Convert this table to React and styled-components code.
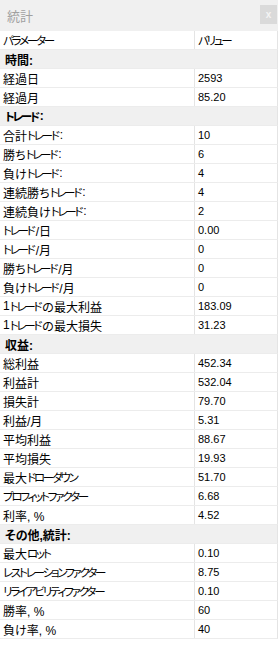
import React from "react";
import styled, { createGlobalStyle } from "styled-components";

const GlobalStyle = createGlobalStyle`
  html, body {
    margin: 0;
    padding: 0;
    background: #ffffff;
  }
  body {
    font-family: "Liberation Sans", "Noto Sans CJK JP", sans-serif;
    font-size: 12px;
    color: #000;
    font-feature-settings: "palt";
  }
`;

const Panel = styled.div`
  width: 278px;
  height: 656px;
  background: #fff;
  display: flex;
  flex-direction: column;
`;

const TitleBar = styled.div`
  height: 31px;
  background: #f0f0f0;
  display: flex;
  align-items: center;
  justify-content: space-between;
  padding-left: 7px;
  box-sizing: border-box;
`;

const Title = styled.span`
  color: #a0a0a0;
  font-size: 13px;
`;

const CloseButton = styled.div`
  width: 17px;
  height: 19px;
  margin-right: 1px;
  margin-top: -2px;
  background: #dadada;
  color: #f4f4f4;
  font-size: 10px;
  font-weight: bold;
  display: flex;
  align-items: center;
  justify-content: center;
`;

const Table = styled.div`
  display: flex;
  flex-direction: column;
`;

const Row = styled.div`
  display: grid;
  grid-template-columns: 195px 1fr;
  height: 19px;
  box-sizing: border-box;
  border-bottom: 1px solid #ececec;
  border-right: 1px solid #e4e4e4;
  background: ${(p) => (p.section ? "#f0f0f0" : "#fff")};
`;

const Cell = styled.div`
  display: flex;
  align-items: center;
  padding-left: ${(p) => (p.section ? "5px" : "3px")};
  white-space: nowrap;
  overflow: hidden;
  font-weight: ${(p) => (p.section ? "bold" : "normal")};
  border-right: ${(p) => (p.divider ? "1px solid #e4e4e4" : "none")};
`;

const Value = styled(Cell)`
  padding-left: 3px;
  font-size: 11px;
`;

// katakana in the original UI font are much narrower than kanji
const Kana = styled.span`
  font-size: 11.5px;
  letter-spacing: -2.2px;
  margin-right: 2px;
`;

const narrow = (text) =>
  text.split(/([\u30A0-\u30FF]+)/).map((part, i) =>
    /[\u30A0-\u30FF]/.test(part) ? <Kana key={i}>{part}</Kana> : part
  );

const rows = [
  ["時間:", null, true],
  ["経過日", "2593"],
  ["経過月", "85.20"],
  ["トレード:", null, true],
  ["合計トレード:", "10"],
  ["勝ちトレード:", "6"],
  ["負けトレード:", "4"],
  ["連続勝ちトレード:", "4"],
  ["連続負けトレード:", "2"],
  ["トレード/日", "0.00"],
  ["トレード/月", "0"],
  ["勝ちトレード/月", "0"],
  ["負けトレード/月", "0"],
  ["1トレードの最大利益", "183.09"],
  ["1トレードの最大損失", "31.23"],
  ["収益:", null, true],
  ["総利益", "452.34"],
  ["利益計", "532.04"],
  ["損失計", "79.70"],
  ["利益/月", "5.31"],
  ["平均利益", "88.67"],
  ["平均損失", "19.93"],
  ["最大ドローダウン", "51.70"],
  ["プロフィットファクター", "6.68"],
  ["利率, %", "4.52"],
  ["その他,統計:", null, true],
  ["最大ロット", "0.10"],
  ["レストレーションファクター", "8.75"],
  ["リライアビリティファクター", "0.10"],
  ["勝率, %", "60"],
  ["負け率, %", "40"],
];

export default function App() {
  return (
    <Panel>
      <GlobalStyle />
      <TitleBar>
        <Title>統計</Title>
        <CloseButton>x</CloseButton>
      </TitleBar>
      <Table>
        <Row>
          <Cell divider>{narrow("パラメーター")}</Cell>
          <Cell>{narrow("バリュー")}</Cell>
        </Row>
        {rows.map(([label, value, section]) =>
          section ? (
            <Row key={label} section>
              <Cell section>{narrow(label)}</Cell>
            </Row>
          ) : (
            <Row key={label}>
              <Cell divider>{narrow(label)}</Cell>
              <Value>{value}</Value>
            </Row>
          )
        )}
      </Table>
    </Panel>
  );
}
